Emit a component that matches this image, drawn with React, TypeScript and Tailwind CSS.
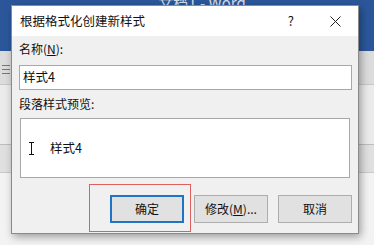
import React from "react";

const font = { fontFamily: '"Noto Sans CJK SC", "Noto Sans", sans-serif' };

export default function App() {
  return (
    <div className="relative w-[374px] h-[245px] overflow-hidden bg-[#f0f0f0]" style={font}>
      {/* Word background */}
      <div className="flex flex-col w-full h-full">
        <div className="h-[51px] bg-[#2b579a] flex justify-center">
          <span className="text-white text-[15px] leading-none -mt-[5px] ml-[30px] opacity-80">文档1 - Word</span>
        </div>
        <div className="h-[34px] bg-[#dcdcdc] border-b border-[#c8c8c8] flex flex-col gap-[3px] pt-[14px] pl-[2px]">
          <div className="w-[8px] h-px bg-[#777]" />
          <div className="w-[8px] h-px bg-[#777]" />
          <div className="w-[8px] h-px bg-[#777]" />
        </div>
        <div className="h-[60px] bg-[#ebebeb] border-b border-[#bdbdbd]" />
        <div className="h-[28px] bg-[#e0e0e0] border-b border-[#c9c9c9]" />
        <div className="flex-1 bg-[#f3f3f3]" />
      </div>

      {/* Dialog */}
      <div className="absolute left-[11px] top-[5px] w-[348px] h-[229px] bg-[#f0f0f0] border border-[#8a8a8a] shadow-[2px_3px_8px_rgba(0,0,0,0.35)] flex flex-col">
        <div className="h-[30px] bg-white flex items-center pl-[8px] pr-[17px] text-[12.5px] text-[#111]">
          <span className="flex-1">根据格式化创建新样式</span>
          <span className="mr-[36px] text-[13px]">?</span>
          <svg width="11" height="11" viewBox="0 0 11 11">
            <path d="M0.5 0.5 L10.5 10.5 M10.5 0.5 L0.5 10.5" stroke="#222" strokeWidth="1" />
          </svg>
        </div>
        <div className="flex flex-col px-[7px] pt-[3px] text-[12px] text-[#111]">
          <div className="h-[26px] leading-[18px] pt-[1px]">
            名称(<span className="underline">N</span>):
          </div>
          <div className="h-[25px] bg-white border border-[#a8a8a8] flex items-center pl-[3px] text-[12.5px] mr-[-1px]">
            样式4
          </div>
          <div className="h-[28px] leading-[28px]">段落样式预览:</div>
          <div className="h-[60px] mx-[1px] bg-white border border-[#a8a8a8] flex items-center pl-[8px] text-[12.5px]">
            <svg width="5" height="13" viewBox="0 0 5 13" className="mr-[16px]">
              <path d="M0 0.5 H5 M0 12.5 H5 M2.5 0.5 V12.5" stroke="#111" strokeWidth="1" />
            </svg>
            <span>样式4</span>
          </div>
          <div className="flex justify-end gap-[10px] mt-[17px] mr-[-1px]">
            <div className="relative w-[74px] h-[28px] bg-[#e1e1e1] border-2 border-[#1f74c4] flex items-center justify-center">
              确定
              <div className="absolute left-[-23px] top-[-13px] w-[102px] h-[48px] border border-[#e06060]" />
            </div>
            <div className="w-[74px] h-[28px] bg-[#e1e1e1] border border-[#adadad] flex items-center justify-center">
              修改(<span className="underline">M</span>)...
            </div>
            <div className="w-[74px] h-[28px] bg-[#e1e1e1] border border-[#adadad] flex items-center justify-center">
              取消
            </div>
          </div>
        </div>
      </div>
    </div>
  );
}
